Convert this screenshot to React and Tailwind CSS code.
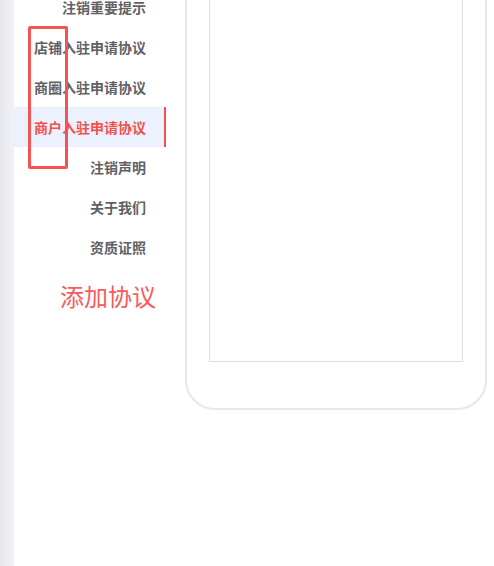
import React from "react";

const items = [
  "注销重要提示",
  "店铺入驻申请协议",
  "商圈入驻申请协议",
  "商户入驻申请协议",
  "注销声明",
  "关于我们",
  "资质证照",
];

export default function App() {
  const active = 3;

  return (
    <div
      className="relative flex h-[566px] w-[494px] overflow-hidden bg-white"
      style={{ fontFamily: '"Noto Sans CJK SC", "Noto Sans", sans-serif' }}
    >
      {/* left strip */}
      <div className="h-full w-[14px] shrink-0 bg-gradient-to-r from-[#e6e8ee] to-[#f0f2f6]" />

      {/* menu column */}
      <div className="-mt-[13px] flex w-[152px] shrink-0 flex-col">
        {items.map((item, i) => (
          <div
            key={item}
            className={`flex h-10 items-center justify-end text-sm font-semibold ${
              i === active
                ? "border-r-2 border-[#f5504b] bg-[#ebf2fe] pr-[18px] text-[#f5504b]"
                : "pr-5 text-[#5f6166]"
            }`}
          >
            {item}
          </div>
        ))}
        <div className="mt-[13px] pl-[46px] text-2xl leading-8 text-[#f75b5b]">
          添加协议
        </div>
      </div>

      {/* phone preview */}
      <div className="ml-[19px] -mt-8 h-[442px] w-[302px] shrink-0 rounded-b-[30px] border-2 border-[#e8e8e8] px-[22px] pb-[46px]">
        <div className="h-full w-full border border-[#dedede]" />
      </div>

      {/* annotation box */}
      <div className="absolute left-[28px] top-[26px] h-[143px] w-[40px] rounded-[2px] border-[3px] border-[#f55353]" />
    </div>
  );
}
